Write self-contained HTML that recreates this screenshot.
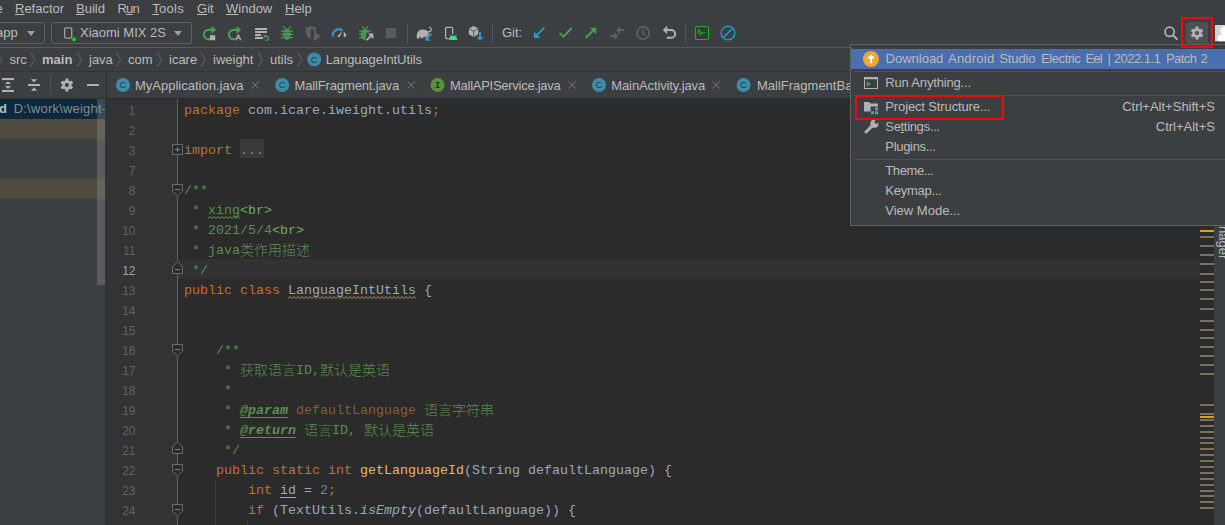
<!DOCTYPE html>
<html><head><meta charset="utf-8">
<style>
*{box-sizing:border-box;margin:0;padding:0}
html,body{width:1225px;height:525px;overflow:hidden;background:#3c3f41}
body{position:relative;font-family:"Liberation Sans","Noto Sans CJK SC",sans-serif;font-size:13px;color:#bbbbbb}
.abs{position:absolute}
.t{position:absolute;white-space:nowrap;line-height:16px}
u{text-decoration:underline;text-underline-offset:1px}
/* menu */
#menu .t{top:1px}
/* toolbar */
.combo{position:absolute;top:22px;height:22px;border:1px solid #5e6060;border-radius:3px}
.tri{position:absolute;width:0;height:0;border-left:4.5px solid transparent;border-right:4.5px solid transparent;border-top:5.5px solid #9a9da1}
.vsep{position:absolute;width:1px;background:#555759}
svg{position:absolute;overflow:visible}
/* breadcrumbs */
#bc .t{top:52px}
.chev{position:absolute;top:53px;width:6px;height:14px}
/* tabs */
#tabs .t{top:78px}
.cic{position:absolute;width:14px;height:14px;border-radius:50%;top:78px;font-size:9px;line-height:14px;text-align:center;color:#1f3a45}
/* editor */
#ed{position:absolute;left:107px;top:99px;width:1107px;height:426px;background:#2b2b2b;overflow:hidden}
#gut{position:absolute;left:0;top:0;width:71px;height:426px;background:#313335;border-right:1px solid #606060}
.ln{position:absolute;left:0;width:28.5px;text-align:right;font-family:"Liberation Sans",sans-serif;font-size:12px;line-height:20px;color:#606366;height:20px;margin-top:1.5px}
.cl{position:absolute;left:77px;white-space:pre;font-family:"Liberation Mono","Noto Sans CJK SC",monospace;font-size:13.33px;line-height:20px;height:20px;color:#a9b7c6;margin-top:2px;opacity:0.9}
.k{color:#cc7832}.d{color:#629755}.m{color:#77b767}.n{color:#6897bb}.f{color:#ffc66d}
.tag{color:#629755;font-weight:bold;font-style:italic;text-decoration:underline;text-underline-offset:3px;text-decoration-thickness:1px;text-decoration-skip-ink:none}
.pv{color:#8a653b}
.cj{font-family:"Noto Sans CJK SC",sans-serif;font-size:14px;font-weight:300;line-height:0;position:relative;top:0.7px}
.ln.cur{color:#a4a3a3}
.fold{color:#8c8c8c}
.wv{}
.wv2{}
.ul{text-decoration:underline;text-underline-offset:3px;text-decoration-thickness:1px}
.cl i{font-style:italic}
/* popup */
#pop{position:absolute;left:850px;top:44px;width:400px;height:182px;background:#3c3f41;border:1px solid #5f6163}
#pop .t{left:34.3px}
#pop .w{position:absolute;top:0}
#pop .s{position:absolute;left:3px;right:0;height:1px;background:#515151}
#pop .sc{position:absolute;white-space:nowrap;line-height:16px}
</style></head><body>

<!-- MENU BAR -->
<div id="menu">
<div class="t" style="left:-4.5px">e</div>
<div class="t" style="left:15px"><u>R</u>efactor</div>
<div class="t" style="left:76px"><u>B</u>uild</div>
<div class="t" style="left:117.5px;letter-spacing:-0.8px">R<u>u</u>n</div>
<div class="t" style="left:152.3px;letter-spacing:0.25px"><u>T</u>ools</div>
<div class="t" style="left:197px"><u>G</u>it</div>
<div class="t" style="left:226px"><u>W</u>indow</div>
<div class="t" style="left:285px"><u>H</u>elp</div>
</div>

<!-- TOOLBAR -->
<div id="tb">
<div class="combo" style="left:-10px;width:55px"></div>
<div class="t" style="left:-4px;top:25px">app</div>
<div class="tri" style="left:27px;top:31px"></div>
<div class="combo" style="left:51px;width:141px"></div>
<div class="t" style="left:80px;top:25px">Xiaomi MIX 2S</div>
<div class="tri" style="left:173.5px;top:31px"></div>
<div class="vsep" style="left:407px;top:23px;height:20px"></div>
<div class="vsep" style="left:492px;top:23px;height:20px"></div>
<div class="vsep" style="left:685px;top:23px;height:20px"></div>
<div class="t" style="left:502px;top:25px">Git:</div>
<div class="abs" style="left:0;top:47px;width:1225px;height:1px;background:#555759"></div>
</div>

<svg id="ico" style="left:0;top:0" width="1225" height="525" viewBox="0 0 1225 525">
<rect x="64.7" y="27.9" width="7" height="10.2" rx="1" fill="none" stroke="#9da0a4" stroke-width="1.3"/><circle cx="74" cy="39.3" r="2.1" fill="#0ad10a"/>
<g transform="translate(202.8,0)">
<path d="M9 29.9 H5.7 A4.6 4.6 0 0 0 5.7 39.1 H7.4" fill="none" stroke="#499c54" stroke-width="2.2"/>
<path d="M8.6 25.9 L13.6 29.8 L8.6 33.7 Z" fill="#499c54"/>
</g>
<rect x="210" y="35.2" width="5.2" height="5" fill="#afb1b3"/>
<g transform="translate(227.8,0)">
<path d="M9 29.9 H5.7 A4.6 4.6 0 0 0 5.7 39.1 H7.4" fill="none" stroke="#499c54" stroke-width="2.2"/>
<path d="M8.6 25.9 L13.6 29.8 L8.6 33.7 Z" fill="#499c54"/>
</g>
<path d="M235.2 40.2 L237.7 34.4 h1.2 L241.4 40.2 h-1.4 l-0.6 -1.5 h-2.2 l-0.6 1.5z M237.7 37.6h1.2l-0.6-1.6z" fill="#afb1b3" fill-rule="evenodd"/>
<path d="M255 28h12v2h-12z M255 31h12v2h-12z M255 34h6v2h-6z M255 37h8v2h-8z" fill="#afb1b3"/>
<path d="M265.2 36.2 h1.3 a2 2 0 0 1 0 4 h-1" fill="none" stroke="#499c54" stroke-width="1.2"/><path d="M263 36.2 l2.6 -2 v4z" fill="#499c54"/>
<g fill="#499c54" stroke="#499c54">
<ellipse cx="287" cy="34.4" rx="3.6" ry="5.6" stroke="none"/>
<path d="M283.2 26.3 l2.4 2.8 M290.8 26.3 l-2.4 2.8" stroke-width="1.3" fill="none"/>
<path d="M281 31.2h12 M281 34.4h12 M281 37.6h12" stroke-width="1.3" fill="none"/>
</g>
<path d="M284 32.8h6 M284 36h6" stroke="#3c3f41" stroke-width="0.6" opacity="0.8"/>
<path d="M305.8 27.5 l5 -1.3 l5 1.3 v4.2 h-2.2 v-2.4 l-2.8 -0.8 v10.3 c-3 -1.2 -5 -3.6 -5 -7z" fill="#5e6062"/><path d="M314 31.8 l7 4.6 l-7 4.6z" fill="#5e6062"/>
<path d="M333 36.6 A6.1 6.1 0 0 1 342.4 30.3" fill="none" stroke="#3592c4" stroke-width="2.2"/>
<path d="M337.2 36.8 l5.6 -6.6 l-3.2 7z" fill="#afb1b3"/><path d="M343.8 31.6 A6.4 6.4 0 0 1 346.2 36.8 h-2.6z" fill="#afb1b3"/>
<g fill="#499c54" stroke="#499c54">
<ellipse cx="365" cy="34.6" rx="4" ry="5.6" stroke="none"/>
<path d="M362.2 26.3 l2 2.8 M367.8 26.3 l-2 2.8" stroke-width="1.3" fill="none"/>
<path d="M359.2 31.2h11.6 M359.2 34.4h6 M359.2 37.6h6" stroke-width="1.3" fill="none"/>
</g>
<path d="M361.6 32.8h3 M361.6 36h3" stroke="#3c3f41" stroke-width="0.6" opacity="0.7"/>
<path d="M366.6 32.4 h7.4 v9 h-8.6 v-2.6z" fill="#3c3f41"/>
<path d="M366.6 40.2 l4.8 -4.8" stroke="#afb1b3" stroke-width="1.9" fill="none"/><path d="M367.8 33.6 h5.6 v5.6z" fill="#afb1b3"/>
<rect x="386" y="28" width="10" height="10" fill="#5a5a5a"/>
<path d="M416.8 38.6 c-0.4 -4.6 1 -8.2 4.6 -9 c2.6 -0.6 5 0.2 6.4 1.6 c1.4 0.4 2.6 -0.2 2.8 -1.6 c0.2 -1.2 -0.8 -1.8 -1.6 -1.4 l-0.4 -0.9 c1.6 -0.8 3.4 0.4 3.2 2.4 c-0.2 2 -1.8 3 -3.4 2.8 c0.4 1.6 0.2 3.2 -0.4 4.6 l-3.8 0 l-2.4 1.5 h-1 v-1.9 h-1.4 v1.9z" fill="#afb1b3"/>
<path d="M431.4 33.8 l-5 5" stroke="#3592c4" stroke-width="2" fill="none"/><path d="M425.2 35.2 v5.6 h5.6z" fill="#3592c4"/>
<path d="M452.6 34 v-5.6 a1 1 0 0 0 -1 -1 h-5 a1 1 0 0 0 -1 1 v9.2 a1 1 0 0 0 1 1 h2" fill="none" stroke="#afb1b3" stroke-width="1.3"/>
<path d="M448.8 40 a4.25 4.6 0 0 1 8.5 0z" fill="#3ddc84"/><path d="M450.6 36.2 l-1 -1.6 M455.5 36.2 l1 -1.6" stroke="#3ddc84" stroke-width="0.9"/>
<path d="M473.6 26.1 l4.7 2.5 v5.6 l-4.7 2.7 l-4.7 -2.7 v-5.6z" fill="#afb1b3"/><path d="M469.3 28.9 l4.3 2.4 l4.3 -2.4 M473.6 31.3 v5.2" stroke="#3c3f41" stroke-width="0.8" fill="none"/>
<path d="M479 32 h2 v5 h2.8 l-3.8 3.8 l-3.8 -3.8 h2.8z" fill="#3592c4"/>
<path d="M544.4 27.6 l-8 8" stroke="#3592c4" stroke-width="1.9" fill="none"/><path d="M533.8 31.6 v6.4 h6.4z" fill="#3592c4"/>
<path d="M559.6 33 l4 3.6 l8 -8.6" stroke="#499c54" stroke-width="2" fill="none"/>
<path d="M585.6 38 l8 -8" stroke="#499c54" stroke-width="1.9" fill="none"/><path d="M589.8 27.8 h6.4 v6.4z" fill="#499c54"/>
<path d="M616 30 l4 -4 v3 h4.2 v2 h-4.2 v3z M618.2 36 l-4 -4 v3 h-4.2 v2 h4.2 v3z" fill="#5e6062"/>
<circle cx="643" cy="33" r="6.1" fill="none" stroke="#5e6062" stroke-width="1.7"/><path d="M643 29.2 v4 l2.6 2" fill="none" stroke="#5e6062" stroke-width="1.5"/>
<path d="M662.8 30 l4.4 -4.2 v8.4z" fill="#afb1b3"/><path d="M667 30 h4.2 a3.9 3.9 0 0 1 0 7.8 h-4.4" fill="none" stroke="#afb1b3" stroke-width="2"/>
<rect x="695.5" y="26.5" width="13" height="13" rx="1.5" fill="#35383a" stroke="#15b315" stroke-width="1.1"/><path d="M696.5 33.6 l1.5 -0.6 l1 -4 l1.6 6.6 l1.3 -4 l1.2 2 l1.2 -1.4 l1 1 l1.2 -0.4" fill="none" stroke="#15b315" stroke-width="1"/>
<circle cx="728" cy="33" r="6.9" fill="none" stroke="#1e9ee6" stroke-width="1.3"/><path d="M723.2 37.8 l9.6 -9.6" stroke="#1e9ee6" stroke-width="1.4"/>
<path d="M-2.6 52.2 l4.4 7.3 l-4.4 7.3" fill="none" stroke="#636567" stroke-width="1"/>
<path d="M30.4 52.2 l4.4 7.3 l-4.4 7.3" fill="none" stroke="#636567" stroke-width="1"/>
<path d="M77.2 52.2 l4.4 7.3 l-4.4 7.3" fill="none" stroke="#636567" stroke-width="1"/>
<path d="M116.2 52.2 l4.4 7.3 l-4.4 7.3" fill="none" stroke="#636567" stroke-width="1"/>
<path d="M157.2 52.2 l4.4 7.3 l-4.4 7.3" fill="none" stroke="#636567" stroke-width="1"/>
<path d="M201 52.2 l4.4 7.3 l-4.4 7.3" fill="none" stroke="#636567" stroke-width="1"/>
<path d="M258 52.2 l4.4 7.3 l-4.4 7.3" fill="none" stroke="#636567" stroke-width="1"/>
<path d="M297.6 52.2 l4.4 7.3 l-4.4 7.3" fill="none" stroke="#636567" stroke-width="1"/>
<circle cx="314.2" cy="59.4" r="7" fill="#3e8caa"/><text x="314.2" y="62.699999999999996" text-anchor="middle" font-family="Liberation Sans, sans-serif" font-size="9.5" fill="#1f3d4a">C</text>
<circle cx="123" cy="85" r="7" fill="#3e8caa"/><text x="123" y="88.3" text-anchor="middle" font-family="Liberation Sans, sans-serif" font-size="9.5" fill="#1f3d4a">C</text>
<circle cx="282.2" cy="85" r="7" fill="#3e8caa"/><text x="282.2" y="88.3" text-anchor="middle" font-family="Liberation Sans, sans-serif" font-size="9.5" fill="#1f3d4a">C</text>
<circle cx="437.5" cy="85" r="7" fill="#5a9140"/><text x="437.5" y="88.2" text-anchor="middle" font-family="Liberation Mono, monospace" font-weight="bold" font-size="9.5" fill="#1f3a17">I</text>
<circle cx="599" cy="85" r="7" fill="#3e8caa"/><text x="599" y="88.3" text-anchor="middle" font-family="Liberation Sans, sans-serif" font-size="9.5" fill="#1f3d4a">C</text>
<circle cx="743.5" cy="85" r="7" fill="#3e8caa"/><text x="743.5" y="88.3" text-anchor="middle" font-family="Liberation Sans, sans-serif" font-size="9.5" fill="#1f3d4a">C</text>
<path d="M251.6 81.4 l7.2 7.2 M258.8 81.4 l-7.2 7.2" stroke="#7c7e80" stroke-width="1" fill="none"/>
<path d="M407.59999999999997 81.4 l7.2 7.2 M414.8 81.4 l-7.2 7.2" stroke="#7c7e80" stroke-width="1" fill="none"/>
<path d="M568.6 81.4 l7.2 7.2 M575.8000000000001 81.4 l-7.2 7.2" stroke="#7c7e80" stroke-width="1" fill="none"/>
<path d="M712.6 81.4 l7.2 7.2 M719.8000000000001 81.4 l-7.2 7.2" stroke="#7c7e80" stroke-width="1" fill="none"/>
<path d="M2 78h12v2h-12z M2 90h12v2h-12z M8 81.2 l3.2 2.9 h-6.4z M8 88.8 l3.2 -2.9 h-6.4z" fill="#afb1b3"/>
<path d="M28 84h12v2h-12z M34 82.4 l3.2 -3.2 h-6.4z M34 87.6 l3.2 3.2 h-6.4z" fill="#afb1b3"/>
<rect x="50" y="75" width="1" height="20" fill="#515457"/>
<rect x="87" y="84" width="12" height="2" fill="#afb1b3"/>
<path d="M65.24 80.60 L65.59 78.53 L68.21 78.53 L68.56 80.60 L69.88 81.37 L71.85 80.63 L73.16 82.90 L71.54 84.23 L71.54 85.77 L73.16 87.10 L71.85 89.37 L69.88 88.63 L68.56 89.40 L68.21 91.47 L65.59 91.47 L65.24 89.40 L63.92 88.63 L61.95 89.37 L60.64 87.10 L62.26 85.77 L62.26 84.23 L60.64 82.90 L61.95 80.63 L63.92 81.37Z M69.0 85 a2.1 2.1 0 1 0 -4.2 0 a2.1 2.1 0 1 0 4.2 0Z" fill="#afb1b3" fill-rule="evenodd"/>
<circle cx="1169.6" cy="31.8" r="4.6" fill="none" stroke="#afb1b3" stroke-width="1.7"/><path d="M1172.8 35 l4.6 4.6" stroke="#afb1b3" stroke-width="2" fill="none"/>
<rect x="1186" y="22" width="22" height="22" rx="3" fill="#4c5052"/>
<path d="M1195.34 28.60 L1195.69 26.53 L1198.31 26.53 L1198.66 28.60 L1199.98 29.37 L1201.95 28.63 L1203.26 30.90 L1201.64 32.23 L1201.64 33.77 L1203.26 35.10 L1201.95 37.37 L1199.98 36.63 L1198.66 37.40 L1198.31 39.47 L1195.69 39.47 L1195.34 37.40 L1194.02 36.63 L1192.05 37.37 L1190.74 35.10 L1192.36 33.77 L1192.36 32.23 L1190.74 30.90 L1192.05 28.63 L1194.02 29.37Z M1199.1 33 a2.1 2.1 0 1 0 -4.2 0 a2.1 2.1 0 1 0 4.2 0Z" fill="#afb1b3" fill-rule="evenodd"/>
<rect x="1215" y="25" width="12" height="16.2" fill="#d2d2d2"/><circle cx="1224.6" cy="31" r="4.4" fill="#ffffff"/><path d="M1217.7 41.2 v-3.4 a2.8 2.8 0 0 1 2.8 -2.8 h6 v6.2z" fill="#ffffff"/>
</svg>

<!-- BREADCRUMBS -->
<div id="bc">
<div class="t" style="left:9.5px">src</div>
<div class="t" style="left:42px;font-weight:bold">main</div>
<div class="t" style="left:89px">java</div>
<div class="t" style="left:128px">com</div>
<div class="t" style="left:169px">icare</div>
<div class="t" style="left:213px">iweight</div>
<div class="t" style="left:270px">utils</div>
<div class="t" style="left:325.7px;letter-spacing:-0.08px">LanguageIntUtils</div>
<div class="abs" style="left:0;top:71px;width:1225px;height:1px;background:#323232"></div>
</div>

<!-- TABS -->
<div id="tabs">
<div class="t" style="left:135px">MyApplication.java</div>
<div class="t" style="left:294.5px;letter-spacing:-0.14px">MallFragment.java</div>
<div class="t" style="left:450px;letter-spacing:-0.27px">MallAPIService.java</div>
<div class="t" style="left:611.3px;letter-spacing:-0.12px">MainActivity.java</div>
<div class="t" style="left:757px">MallFragmentBa</div>
<div class="abs" style="left:0;top:98px;width:107px;height:1px;background:#323232"></div><div class="abs" style="left:107px;top:98px;width:1118px;height:1px;background:#2b2b2b"></div>
</div>

<!-- LEFT PANEL -->
<div id="lp" class="abs" style="left:0;top:99px;width:105px;height:426px;background:#3c3f41;overflow:hidden">
<div class="abs" style="left:0;top:0;width:105px;height:20px;background:#0d293e"></div>
<div class="abs" style="left:0;top:20px;width:105px;height:20px;background:#4f4b41"></div>
<div class="abs" style="left:0;top:80px;width:105px;height:20px;background:#4f4b41"></div>
<div class="t" style="left:-1px;top:2px;font-weight:bold;color:#bbbbbb">d</div>
<div class="t" style="left:13.7px;top:2px;color:#7f8b91;letter-spacing:0.2px">D:\work\weight-</div>
<div class="abs" style="left:97px;top:0;width:8px;height:186px;background:rgba(166,166,166,0.28)"></div>
</div>
<div class="abs" style="left:106px;top:72px;width:1px;height:27px;background:#2d2f30"></div><div class="abs" style="left:105px;top:99px;width:2px;height:426px;background:#313335"></div>

<!-- EDITOR -->
<div id="ed">
<div class="abs" style="left:0;top:160px;width:1093px;height:20px;background:#323232"></div>
<div class="abs" style="left:133px;top:40px;width:24px;height:19px;background:#3a3a3a"></div>
<div id="gut"></div>
<!--CODE-->
<div class="ln" style="top:0px">1</div>
<div class="ln" style="top:20px">2</div>
<div class="ln" style="top:40px">3</div>
<div class="ln" style="top:60px">7</div>
<div class="ln" style="top:80px">8</div>
<div class="ln" style="top:100px">9</div>
<div class="ln" style="top:120px">10</div>
<div class="ln" style="top:140px">11</div>
<div class="ln cur" style="top:160px">12</div>
<div class="ln" style="top:180px">13</div>
<div class="ln" style="top:200px">14</div>
<div class="ln" style="top:220px">15</div>
<div class="ln" style="top:240px">16</div>
<div class="ln" style="top:260px">17</div>
<div class="ln" style="top:280px">18</div>
<div class="ln" style="top:300px">19</div>
<div class="ln" style="top:320px">20</div>
<div class="ln" style="top:340px">21</div>
<div class="ln" style="top:360px">22</div>
<div class="ln" style="top:380px">23</div>
<div class="ln" style="top:400px">24</div>
<div class="ln" style="top:420px">25</div>
<div class="cl" style="top:0px"><span class="k">package </span>com.icare.iweight.utils<span class="k">;</span></div>
<div class="cl" style="top:40px"><span class="k">import </span><span class="fold">...</span></div>
<div class="cl" style="top:80px"><span class="d">/**</span></div>
<div class="cl" style="top:100px"><span class="d"> * <span class="wv">xing</span></span><span class="m">&lt;br&gt;</span></div>
<div class="cl" style="top:120px"><span class="d"> * 2021/5/4</span><span class="m">&lt;br&gt;</span></div>
<div class="cl" style="top:140px"><span class="d"> * java<span class="cj">类作用描述</span></span></div>
<div class="cl" style="top:160px"><span class="d"> */</span></div>
<div class="cl" style="top:180px"><span class="k">public class </span><span class="wv2">LanguageIntUtils</span> {</div>
<div class="cl" style="top:240px"><span class="d">    /**</span></div>
<div class="cl" style="top:260px"><span class="d">     * <span class="cj">获取语言</span>ID,<span class="cj">默认是英语</span></span></div>
<div class="cl" style="top:280px"><span class="d">     *</span></div>
<div class="cl" style="top:300px"><span class="d">     * <span class="tag">@param</span> <span class="pv">defaultLanguage</span> <span class="cj">语言字符串</span></span></div>
<div class="cl" style="top:320px"><span class="d">     * <span class="tag">@return</span> <span class="cj">语言</span>ID, <span class="cj">默认是英语</span></span></div>
<div class="cl" style="top:340px"><span class="d">     */</span></div>
<div class="cl" style="top:360px"><span class="k">    public static int </span><span class="f">getLanguageId</span>(String defaultLanguage) {</div>
<div class="cl" style="top:380px"><span class="k">        int </span><span class="ul">id</span> = <span class="n">2</span><span class="k">;</span></div>
<div class="cl" style="top:400px"><span class="k">        if </span>(TextUtils.<i>isEmpty</i>(defaultLanguage)) {</div>
<svg style="left:0;top:0" width="120" height="426"><path d="M65.5 45.5h10v10h-10z" fill="#2b2b2b" stroke="#6c6c6c"/><path d="M68 50.5h5M70.5 48v5" stroke="#7d7d7d" fill="none"/><path d="M65.5 85.5h10v6.5l-5 5l-5-5z" fill="#2b2b2b" stroke="#6c6c6c"/><path d="M68 90.5h5" stroke="#7d7d7d" fill="none"/><path d="M65.5 174.5h10v-6.5l-5-5.5l-5 5.5z" fill="#2b2b2b" stroke="#6c6c6c"/><path d="M68 170.5h5" stroke="#7d7d7d" fill="none"/><path d="M65.5 245.5h10v6.5l-5 5l-5-5z" fill="#2b2b2b" stroke="#6c6c6c"/><path d="M68 250.5h5" stroke="#7d7d7d" fill="none"/><path d="M65.5 354.5h10v-6.5l-5-5.5l-5 5.5z" fill="#2b2b2b" stroke="#6c6c6c"/><path d="M68 350.5h5" stroke="#7d7d7d" fill="none"/><path d="M65.5 365.5h10v6.5l-5 5l-5-5z" fill="#2b2b2b" stroke="#6c6c6c"/><path d="M68 370.5h5" stroke="#7d7d7d" fill="none"/><path d="M65.5 405.5h10v6.5l-5 5l-5-5z" fill="#2b2b2b" stroke="#6c6c6c"/><path d="M68 410.5h5" stroke="#7d7d7d" fill="none"/></svg>
<div class="abs" style="left:108px;top:380px;width:1px;height:46px;background:#3b3b3b"></div>
<div class="abs" style="left:140px;top:420px;width:1px;height:6px;background:#3b3b3b"></div>
<svg style="left:0;top:0" width="400" height="426"><polyline points="101.0,119.6 103.0,117.4 105.0,119.6 107.0,117.4 109.0,119.6 111.0,117.4 113.0,119.6 115.0,117.4 117.0,119.6 119.0,117.4 121.0,119.6 123.0,117.4 125.0,119.6 127.0,117.4 129.0,119.6 131.0,117.4 133.0,119.6" fill="none" stroke="#5f9a56" stroke-width="1"/><polyline points="181.0,199.6 183.0,197.4 185.0,199.6 187.0,197.4 189.0,199.6 191.0,197.4 193.0,199.6 195.0,197.4 197.0,199.6 199.0,197.4 201.0,199.6 203.0,197.4 205.0,199.6 207.0,197.4 209.0,199.6 211.0,197.4 213.0,199.6 215.0,197.4 217.0,199.6 219.0,197.4 221.0,199.6 223.0,197.4 225.0,199.6 227.0,197.4 229.0,199.6 231.0,197.4 233.0,199.6 235.0,197.4 237.0,199.6 239.0,197.4 241.0,199.6 243.0,197.4 245.0,199.6 247.0,197.4 249.0,199.6 251.0,197.4 253.0,199.6 255.0,197.4 257.0,199.6 259.0,197.4 261.0,199.6 263.0,197.4 265.0,199.6 267.0,197.4 269.0,199.6 271.0,197.4 273.0,199.6 275.0,197.4 277.0,199.6 279.0,197.4 281.0,199.6 283.0,197.4 285.0,199.6 287.0,197.4 289.0,199.6 291.0,197.4 293.0,199.6 295.0,197.4 297.0,199.6 299.0,197.4 301.0,199.6 303.0,197.4 305.0,199.6 307.0,197.4 309.0,199.6" fill="none" stroke="#9a9158" stroke-width="1"/></svg>
<!--/CODE-->
</div>

<!-- RIGHT STRIP -->
<div class="abs" style="left:1214px;top:99px;width:11px;height:426px;background:#3c3f41"></div>

<!-- POPUP -->
<div id="pop">
<div class="abs" style="left:0;top:4px;width:400px;height:20px;background:#4b6eaf"></div>
<div class="t" style="top:6px;left:0"><span class="w" style="left:34.6px;letter-spacing:-0.01px">Download</span> <span class="w" style="left:97.0px;letter-spacing:0.22px">Android</span> <span class="w" style="left:148.3px;letter-spacing:-0.12px">Studio</span> <span class="w" style="left:190.0px;letter-spacing:-0.40px">Electric</span> <span class="w" style="left:234.4px;letter-spacing:-0.72px">Eel</span> <span class="w" style="left:256.4px;letter-spacing:0.00px">|</span> <span class="w" style="left:262.7px;letter-spacing:-0.50px">2022.1.1</span> <span class="w" style="left:314.9px;letter-spacing:-0.55px">Patch</span> <span class="w" style="left:349.4px;letter-spacing:-0.60px">2</span></div>
<div class="s" style="top:26px"></div>
<div class="t" style="top:30px;letter-spacing:-0.17px">Run Anything...</div>
<div class="s" style="top:50px"></div>
<div class="t" style="top:54px;letter-spacing:-0.13px">Project Structure...</div>
<div class="t" style="top:74px;letter-spacing:-0.33px">Se<u>t</u>tings...</div>
<div class="t" style="top:94px;letter-spacing:-0.31px">Plugins...</div>
<div class="s" style="top:114px"></div>
<div class="t" style="top:118px;letter-spacing:-0.41px">Theme...</div>
<div class="t" style="top:138px;letter-spacing:-0.24px">Keymap...</div>
<div class="t" style="top:158px">View Mode...</div>
<svg style="left:0;top:0" width="374" height="180" viewBox="851 45 374 180">
<circle cx="871" cy="59" r="8" fill="#f0a732"/><path d="M869.9 63.2 v-4.6 h-3 l4.1 -4.2 l4.1 4.2 h-3 v4.6z" fill="#ffffff"/>
<path d="M864 77h14v12h-14z M865 79.2v8.8h12v-8.8z" fill="#afb1b3" fill-rule="evenodd"/><path d="M866.8 81.2 l4.4 2.8 l-4.4 2.8z" fill="#499c54"/>
<path d="M864 102 h5 l1.4 1.6 h7.6 v3 h-7.4 v5 h-6.6z" fill="#afb1b3"/><path d="M875 107.2h3v3h-3z M871 111.2h3v3h-3z M875 111.2h3v3h-3z" fill="#3c9fd5"/>
<path d="M866 132 l6.4 -6.4" stroke="#afb1b3" stroke-width="3" stroke-linecap="round" fill="none"/><circle cx="874.4" cy="123.8" r="4.1" fill="#afb1b3"/><path d="M875.2 123 l4.4 -4.4" stroke="#3c3f41" stroke-width="3.2" fill="none"/>
</svg>
<div class="sc" style="right:34px;top:54px">Ctrl+Alt+Shift+S</div>
<div class="sc" style="right:34px;top:74px">Ctrl+Alt+S</div>
</div>

<div id="stripes">
<div class="abs" style="left:1200px;top:229.8px;width:14px;height:2.2px;background:#dca11c"></div>
<div class="abs" style="left:1200px;top:235.8px;width:14px;height:2px;background:#7c725c"></div>
<div class="abs" style="left:1200px;top:245px;width:14px;height:2px;background:#7c725c"></div>
<div class="abs" style="left:1200px;top:254px;width:14px;height:2px;background:#7c725c"></div>
<div class="abs" style="left:1200px;top:263.3px;width:14px;height:2px;background:#7c725c"></div>
<div class="abs" style="left:1200px;top:272.5px;width:14px;height:2px;background:#7c725c"></div>
<div class="abs" style="left:1200px;top:281px;width:14px;height:2px;background:#7c725c"></div>
<div class="abs" style="left:1200px;top:289.3px;width:14px;height:2px;background:#7c725c"></div>
<div class="abs" style="left:1200px;top:298.4px;width:14px;height:2px;background:#7c725c"></div>
<div class="abs" style="left:1200px;top:307.6px;width:14px;height:2px;background:#7c725c"></div>
<div class="abs" style="left:1200px;top:319.6px;width:14px;height:2px;background:#7c725c"></div>
<div class="abs" style="left:1200px;top:328.8px;width:14px;height:2px;background:#7c725c"></div>
<div class="abs" style="left:1200px;top:336.7px;width:14px;height:2px;background:#7c725c"></div>
<div class="abs" style="left:1200px;top:345.8px;width:14px;height:2px;background:#7c725c"></div>
<div class="abs" style="left:1200px;top:354.8px;width:14px;height:2px;background:#7c725c"></div>
<div class="abs" style="left:1200px;top:364px;width:14px;height:2px;background:#7c725c"></div>
<div class="abs" style="left:1200px;top:372.6px;width:14px;height:2px;background:#7c725c"></div>
<div class="abs" style="left:1200px;top:404.2px;width:14px;height:2px;background:#7c725c"></div>
<div class="abs" style="left:1200px;top:413px;width:14px;height:2px;background:#7c725c"></div>
<div class="abs" style="left:1200px;top:419.4px;width:14px;height:2px;background:#7c725c"></div>
<div class="abs" style="left:1200px;top:425.4px;width:14px;height:2px;background:#7c725c"></div>
<div class="abs" style="left:1200px;top:431.4px;width:14px;height:2px;background:#7c725c"></div>
<div class="abs" style="left:1200px;top:437.4px;width:14px;height:2px;background:#7c725c"></div>
<div class="abs" style="left:1200px;top:441.8px;width:14px;height:2px;background:#7c725c"></div>
<div class="abs" style="left:1200px;top:447.8px;width:14px;height:2px;background:#7c725c"></div>
<div class="abs" style="left:1200px;top:453.8px;width:14px;height:2px;background:#7c725c"></div>
<div class="abs" style="left:1200px;top:459.8px;width:14px;height:2px;background:#7c725c"></div>
<div class="abs" style="left:1200px;top:465.8px;width:14px;height:2px;background:#7c725c"></div>
<div class="abs" style="left:1200px;top:471.8px;width:14px;height:2px;background:#7c725c"></div>
<div class="abs" style="left:1200px;top:477.8px;width:14px;height:2px;background:#7c725c"></div>
<div class="abs" style="left:1200px;top:483.8px;width:14px;height:2px;background:#7c725c"></div>
<div class="abs" style="left:1200px;top:489.8px;width:14px;height:2px;background:#7c725c"></div>
<div class="abs" style="left:1200px;top:494.8px;width:14px;height:2px;background:#7c725c"></div>
<div class="abs" style="left:1200px;top:500.8px;width:14px;height:2px;background:#7c725c"></div>
<div class="abs" style="left:1200px;top:506.8px;width:14px;height:2px;background:#7c725c"></div>
<div class="abs" style="left:1200px;top:416.2px;width:14px;height:2.2px;background:#dca11c"></div>
</div>
<div class="t" style="left:1218px;top:225.5px;transform-origin:0 0;transform:rotate(90deg) translate(0,-12.5px);font-size:13px;line-height:16px;height:16px">nager</div>
<div class="abs" style="left:1180.5px;top:16.5px;width:32px;height:31.5px;border:2px solid #ee0a10"></div>
<div class="abs" style="left:854.5px;top:94.5px;width:149px;height:25px;border:2px solid #ee0a10"></div>
</body></html>
